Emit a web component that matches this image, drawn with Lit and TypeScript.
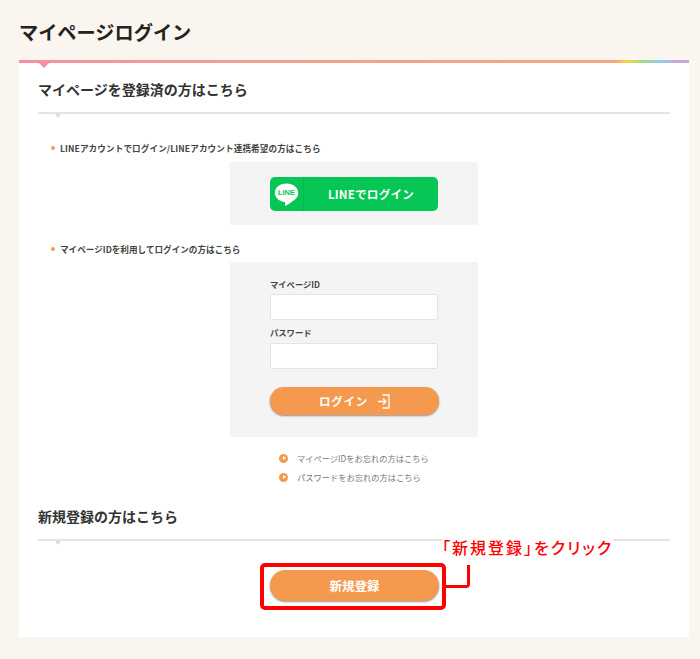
import {LitElement, css, html} from 'lit';
import {customElement} from 'lit/decorators.js';

@customElement('app-root')
export class AppRoot extends LitElement {
  static styles = css`
    :host {
      display: block;
      width: 700px;
      height: 659px;
      overflow: hidden;
      background: #faf6ef;
      color: #333;
      font-family: "Noto Sans CJK JP", "Noto Sans", sans-serif;
    }
    .title {
      margin: 0;
      padding: 18px 0 0 19px;
      height: 60px;
      box-sizing: border-box;
      font-size: 19.2px;
      line-height: 28px;
      font-weight: 700;
      color: #222;
    }
    .card {
      position: relative;
      margin: 0 11px 0 19px;
      height: 577px;
      box-sizing: border-box;
      padding: 3px 19px 0;
      background: #fff;
    }
    .band {
      position: absolute;
      top: 0;
      left: 0;
      right: 0;
      height: 3px;
      background: linear-gradient(90deg, #f590a0 0%, #f8a08e 45%, #f9a47c 89%, #f8d24c 90.7%, #a8d884 93%, #8cd0f0 95.7%, #c8a8d8 98.2%);
    }
    .band-notch {
      position: absolute;
      top: 3px;
      left: 20px;
      width: 0;
      height: 0;
      border: 5px solid transparent;
      border-top-color: #f590a0;
      border-bottom: 0;
    }
    h2 {
      margin: 0;
      font-size: 14px;
      line-height: 20px;
      font-weight: 700;
      color: #333;
    }
    .first { padding-top: 16px; }
    .second { margin-top: 22px; }
    .rule {
      position: relative;
      width: 632px;
      height: 2px;
      margin-top: 13px;
      background: #e4e4e4;
    }
    .rule::after {
      content: "";
      position: absolute;
      top: 2px;
      left: 17px;
      width: 0;
      height: 0;
      border: 3px solid transparent;
      border-top: 4px solid #dcdcdc;
      border-bottom: 0;
    }
    .lead {
      display: flex;
      align-items: center;
      gap: 5px;
      margin: 0 0 0 13px;
      height: 14px;
      font-size: 8.6px;
      font-weight: 700;
      color: #444;
      white-space: nowrap;
    }
    .lead::before {
      content: "";
      width: 4px;
      height: 4px;
      border-radius: 50%;
      background: #f59a50;
    }
    .lead.one { margin-top: 27px; letter-spacing: 0.1px; }
    .lead.two { margin-top: 17px; }
    .panel {
      box-sizing: border-box;
      width: 248px;
      margin: 7px 0 0 192px;
      padding: 0 40px;
      background: #f4f4f4;
    }
    .panel.line { height: 63px; padding-top: 15px; }
    .panel.form { height: 175px; margin-top: 6px; padding-top: 15px; }
    .line-btn {
      display: flex;
      align-items: center;
      width: 168px;
      height: 34px;
      border-radius: 5px;
      background: #06c755;
      color: #fff;
      font-size: 11.6px;
      font-weight: 700;
    }
    .line-icon {
      display: flex;
      justify-content: center;
      align-items: center;
      width: 33px;
      height: 34px;
      border-right: 1px solid #05b74e;
    }
    .line-label { flex: 1; text-align: center; letter-spacing: 0.2px; }
    .line-icon svg text {
      font-family: "Liberation Sans", sans-serif;
      font-size: 7.5px;
      font-weight: 700;
      fill: #06c755;
    }
    label {
      display: block;
      height: 14px;
      font-size: 8.3px;
      line-height: 14px;
      font-weight: 700;
      color: #444;
    }
    input {
      display: block;
      box-sizing: border-box;
      width: 168px;
      height: 26px;
      margin: 3px 0 0;
      padding: 0 6px;
      border: 1px solid #e4e4e4;
      border-radius: 2px;
      background: #fff;
    }
    label.pw { margin-top: 5px; height: 15px; }
    .pill {
      display: flex;
      justify-content: center;
      align-items: center;
      width: 169px;
      border: 0;
      padding: 0;
      border-radius: 16px;
      background: #f5994f;
      box-shadow: 0 1px 2px rgba(60, 60, 60, 0.55);
      color: #fff;
      font-family: inherit;
      font-weight: 700;
    }
    .pill.login {
      gap: 10px;
      height: 28px;
      margin-top: 18px;
      font-size: 11.5px;
      line-height: 26px;
      letter-spacing: 0.8px;
    }
    .pill.signup {
      height: 31px;
      margin: 29px 0 0 232px;
      font-size: 12.5px;
    }
    .links {
      display: flex;
      flex-direction: column;
      gap: 5px;
      margin: 14px 0 0 241px;
      padding: 0;
      list-style: none;
      font-size: 8.25px;
      line-height: 14px;
      color: #777;
    }
    .links li {
      display: flex;
      align-items: center;
      gap: 9px;
    }
    .arrow {
      position: relative;
      width: 9px;
      height: 9px;
      border-radius: 50%;
      background: #f5994f;
    }
    .arrow::after {
      content: "";
      position: absolute;
      top: 2.5px;
      left: 3.5px;
      width: 0;
      height: 0;
      border: 2px solid transparent;
      border-left: 3px solid #fff;
      border-right: 0;
    }
    .frame {
      position: absolute;
      left: 241px;
      top: 503px;
      width: 186px;
      height: 47px;
      box-sizing: border-box;
      border: 4px solid #f00;
      border-radius: 5px;
    }
    .connector {
      position: absolute;
      left: 427px;
      top: 505px;
      width: 24px;
      height: 23px;
      box-sizing: border-box;
      border: solid #f00;
      border-width: 0 3px 3px 0;
      border-bottom-right-radius: 4px;
    }
    .note {
      position: absolute;
      left: 423px;
      top: 476px;
      font-size: 16px;
      line-height: 22px;
      letter-spacing: 2px;
      font-feature-settings: "palt";
      font-weight: 500;
      color: #f00;
      white-space: nowrap;
      background: #fff;
    }
  `;

  render() {
    return html`
      <h1 class="title">マイページログイン</h1>
      <main class="card">
        <div class="band"></div>
        <div class="band-notch"></div>

        <h2 class="first">マイページを登録済の方はこちら</h2>
        <div class="rule"></div>

        <p class="lead one">LINEアカウントでログイン/LINEアカウント連携希望の方はこちら</p>
        <div class="panel line">
          <div class="line-btn">
            <span class="line-icon">
              <svg width="27" height="27" viewBox="0 0 27 27">
                <path fill="#fff" d="M13.5 2.5C6.9 2.5 1.8 6.6 1.8 11.8c0 4.7 4 8.4 9.6 9.2.6.1.9.4.8 1l-.2 2.2c0 .5.4.8.9.5 2.6-1.4 9.6-5.6 11.6-9.4.5-1 .7-2.2.7-3.5 0-5.2-5.1-9.3-11.7-9.3z"/>
                <text x="13.5" y="14.4" text-anchor="middle">LINE</text>
              </svg>
            </span>
            <span class="line-label">LINEでログイン</span>
          </div>
        </div>

        <p class="lead two">マイページIDを利用してログインの方はこちら</p>
        <div class="panel form">
          <label>マイページID</label>
          <input type="text" />
          <label class="pw">パスワード</label>
          <input type="password" />
          <button class="pill login">
            ログイン
            <svg width="12" height="15" viewBox="0 0 12 15" fill="none" stroke="#fff" stroke-width="1.3">
              <path d="M4.5 1h6.5v13H4.5"/>
              <path d="M0 7.5H8M5 4.5l3 3-3 3"/>
            </svg>
          </button>
        </div>

        <ul class="links">
          <li><span class="arrow"></span>マイページIDをお忘れの方はこちら</li>
          <li><span class="arrow"></span>パスワードをお忘れの方はこちら</li>
        </ul>

        <h2 class="second">新規登録の方はこちら</h2>
        <div class="rule"></div>
        <button class="pill signup">新規登録</button>

        <div class="frame"></div>
        <div class="connector"></div>
        <div class="note">「新規登録」をクリック</div>
      </main>
    `;
  }
}
